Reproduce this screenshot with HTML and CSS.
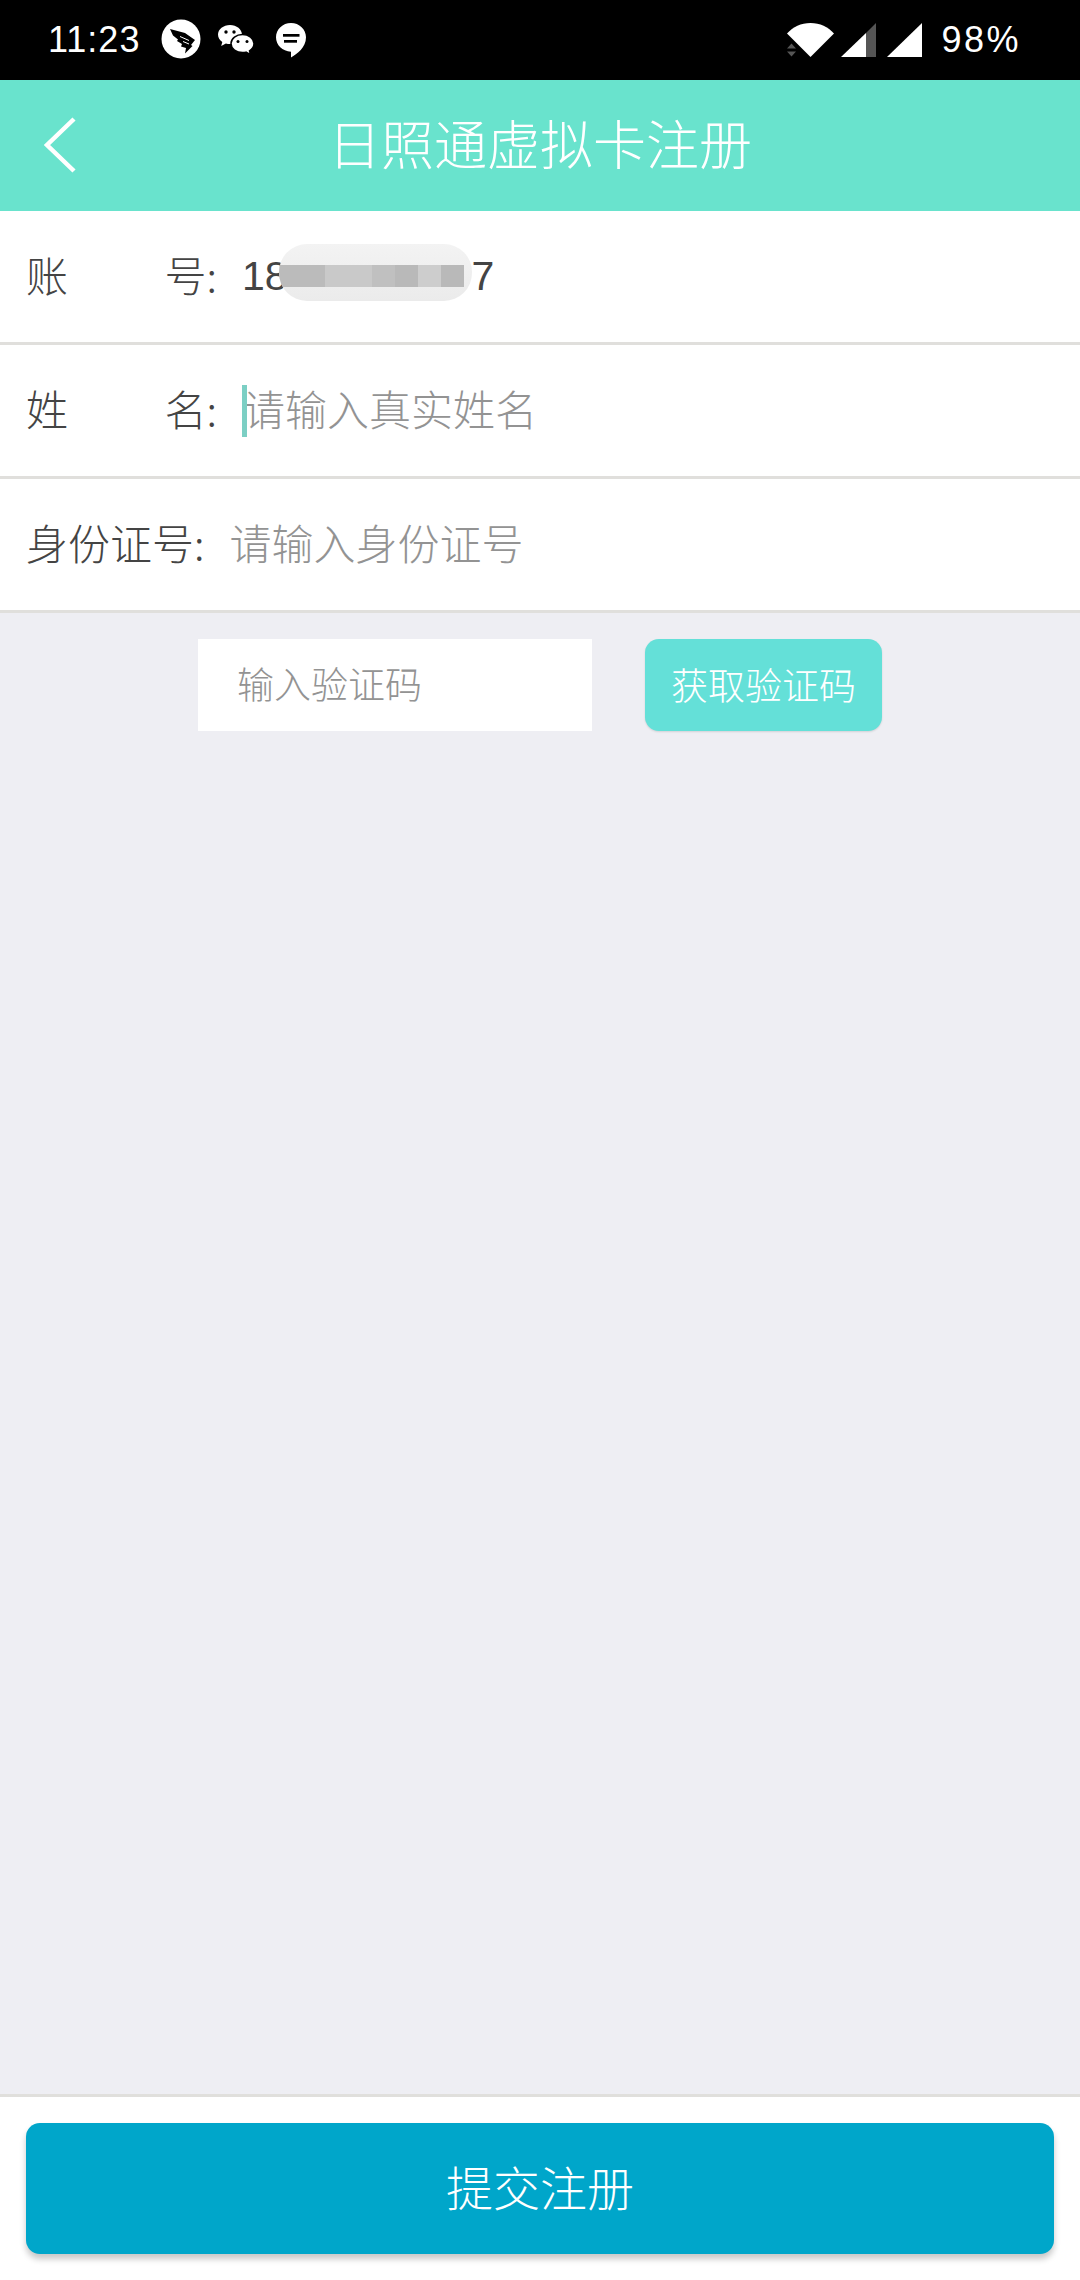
FILE: index.html
```html
<!DOCTYPE html>
<html lang="zh">
<head>
<meta charset="utf-8">
<title>日照通虚拟卡注册</title>
<link rel="stylesheet" href="styles.css">
</head>
<body>
<div class="status">
  <span class="time">11:23</span>
  <div class="notif">
    <svg class="ic-ding" width="40" height="40" viewBox="0 0 40 40"><circle cx="20" cy="20" r="19.500" fill="#fff"/><path d="M9 10L24 14L34 21L30 26L31.500 27L24 34.500L25 29L20 27.500L21 25L16 22L17 20.500L12 16.500Z" fill="#000"/><path d="M19 17.500L28 21.500M22 22.500L28 25" fill="none" stroke="#fff" stroke-width="1"/></svg>
    <svg class="ic-we" width="38" height="32" viewBox="0 0 38 32"><path d="M13 1C6.400 1 1 5.300 1 10.600c0 3 1.700 5.600 4.300 7.400L4.200 22l4.700-2.500c1.300.4 2.700.6 4.100.6 6.600 0 12-4.300 12-9.500S19.600 1 13 1z" fill="#fff"/><path d="M25.500 10.500C19.400 10.500 14 14.400 14 19.600s5.400 9 11.500 9c1.200 0 2.400-.2 3.500-.5l4.500 2.600-1-3.900c2.800-1.700 4.500-4.300 4.500-7.200 0-5.200-5.400-9.100-11.500-9.100z" fill="#fff" stroke="#000" stroke-width="1.500"/><circle cx="9" cy="8" r="1.700" fill="#000"/><circle cx="17" cy="8" r="1.700" fill="#000"/><circle cx="21" cy="17.500" r="1.500" fill="#000"/><circle cx="30" cy="17.500" r="1.500" fill="#000"/></svg>
    <svg class="ic-msg" width="30" height="36" viewBox="0 0 30 36"><path d="M15 1C6.700 1 0 7.400 0 15.300c0 7.800 6.400 14.100 15 14.400V35.500c6-3.300 15-9.800 15-20.200C30 7.400 23.300 1 15 1z" fill="#fff"/><rect x="7" y="12" width="16.500" height="2.700" fill="#000"/><rect x="8" y="18" width="13" height="2.700" fill="#000"/></svg>
  </div>
  <div class="sys">
    <svg class="ic-wifi" width="47" height="34" viewBox="0 0 47 34"><path d="M0 10.500C6 4 14 0 23.500 0S41 4 47 10.500L23.500 34z" fill="#fff"/><path d="M0 25.500L4.500 20.500L9 25.500zM0 28.500H9L4.500 33.500z" fill="#555"/></svg>
    <svg class="ic-sig" width="35" height="34" viewBox="0 0 35 34"><path d="M0 34L25 10V34z" fill="#fff"/><path d="M25 10L35 0V34H25z" fill="#555"/></svg>
    <svg class="ic-sig" width="35" height="34" viewBox="0 0 35 34"><path d="M0 34L35 0V34z" fill="#fff"/></svg>
    <span class="batt">98%</span>
  </div>
</div>

<header class="bar">
  <svg class="back" width="34" height="56" viewBox="0 0 34 56"><path d="M32 2L5 28L32 54" fill="none" stroke="#fff" stroke-width="4.500"/></svg>
  <h1 class="title">日照通虚拟卡注册</h1>
</header>

<main class="main">
  <div class="row">
    <div class="label label-split"><span>账</span><span>号:</span></div>
    <div class="value">
      <span>18</span><span class="gap"></span><span>7</span>
      <div class="mask">
        <div class="mosaic">
          <i class="m1"></i><i class="m1"></i><i class="m2"></i><i class="m2"></i><i class="m3"></i><i class="m5"></i><i class="m4"></i><i class="m5"></i>
        </div>
      </div>
    </div>
  </div>
  <div class="row">
    <div class="label label-split"><span>姓</span><span>名:</span></div>
    <div class="hint hint-focus"><span class="caret"></span>请输入真实姓名</div>
  </div>
  <div class="row">
    <div class="label">身份证号:</div>
    <div class="hint">请输入身份证号</div>
  </div>
  <div class="code">
    <div class="code-input">输入验证码</div>
    <div class="code-btn">获取验证码</div>
  </div>
</main>

<footer class="foot">
  <div class="submit">提交注册</div>
</footer>
</body>
</html>
```
FILE: styles.css
```css
* { box-sizing: border-box; }
html, body { margin: 0; padding: 0; }
body {
  width: 1080px;
  height: 2280px;
  display: flex;
  flex-direction: column;
  background: #eeeef3;
  font-family: "Noto Sans CJK SC", "Liberation Sans", sans-serif;
  font-weight: 300;
  overflow: hidden;
}
.status {
  height: 80px;
  background: #000;
  color: #fff;
  display: flex;
  align-items: center;
  padding: 0 59px 0 48px;
  font-family: "Liberation Sans", sans-serif;
  font-weight: 400;
  font-size: 36px;
}
.time { width: 113px; line-height: 80px; letter-spacing: 1px; }
.notif { display: flex; align-items: center; }
.ic-ding { margin: 0 16px 2px 0; }
.ic-we { margin-right: 21px; }
.sys { margin-left: auto; display: flex; align-items: center; }
.ic-wifi { margin-right: 7px; }
.ic-sig { margin-right: 11px; }
.ic-sig + .ic-sig { margin-right: 19px; }
.batt { letter-spacing: 2.500px; }

.bar {
  position: relative;
  height: 131px;
  background: #69e3cd;
  display: flex;
  align-items: center;
  justify-content: center;
}
.back { position: absolute; left: 42px; top: 37px; }
.title {
  margin: 0;
  padding-bottom: 6px;
  color: #fff;
  font-size: 53px;
  font-weight: 300;
  line-height: 1;
}

.main { flex: 1; display: flex; flex-direction: column; }
.row {
  height: 134px;
  background: #fff;
  border-bottom: 3px solid #e0dfdc;
  display: flex;
  align-items: center;
  padding-left: 26px;
  font-size: 42px;
  color: #444;
}
.label { margin-right: 25px; padding-bottom: 6px; white-space: nowrap; }
.label-split { width: 191px; display: flex; justify-content: space-between; }
.value {
  position: relative;
  display: flex;
  align-items: center;
  font-family: "Liberation Sans", sans-serif;
  font-size: 41px;
  font-weight: 400;
}
.gap { width: 184px; }
.mask {
  position: absolute;
  left: 37px;
  top: -9px;
  width: 193px;
  height: 57px;
  border-radius: 28px;
  background: linear-gradient(#f3f3f3, #ebebeb);
  display: flex;
  padding: 21px 8px 14px 0;
  overflow: hidden;
}
.mosaic { display: flex; width: 100%; height: 22px; }
.mosaic i { flex: 1; height: 100%; }
.m1 { background: #bbb; }
.m2 { background: #c9c9c9; }
.m3 { background: #c0c0c0; }
.m4 { background: #cdcdcd; }
.m5 { background: #b9b9b9; }
.hint { color: #939393; padding-bottom: 6px; }
.hint-focus { position: relative; padding-left: 1px; }
.caret {
  position: absolute;
  left: 0;
  top: 50%;
  width: 5px;
  height: 52px;
  margin-top: -26px;
  background: #7ccfc4;
}

.code { display: flex; padding: 26px 0 0 198px; }
.code-input {
  width: 394px;
  height: 92px;
  background: #fff;
  color: #939393;
  font-size: 37px;
  display: flex;
  align-items: center;
  padding: 0 0 4px 39px;
}
.code-btn {
  width: 237px;
  height: 92px;
  margin-left: 53px;
  border-radius: 14px;
  background: #64e0d8;
  color: #fff;
  font-size: 37px;
  display: flex;
  align-items: center;
  justify-content: center;
  padding-bottom: 2px;
  box-shadow: 0 1px 2px rgba(0, 0, 0, .12);
}

.foot {
  height: 186px;
  background: #fff;
  border-top: 3px solid #e0dfdc;
  padding: 26px;
}
.submit {
  height: 131px;
  border-radius: 14px;
  background: #00a6ca;
  color: #fff;
  font-size: 47px;
  display: flex;
  align-items: center;
  justify-content: center;
  padding-bottom: 6px;
  box-shadow: 0 5px 6px rgba(0, 0, 0, .22);
}
```
